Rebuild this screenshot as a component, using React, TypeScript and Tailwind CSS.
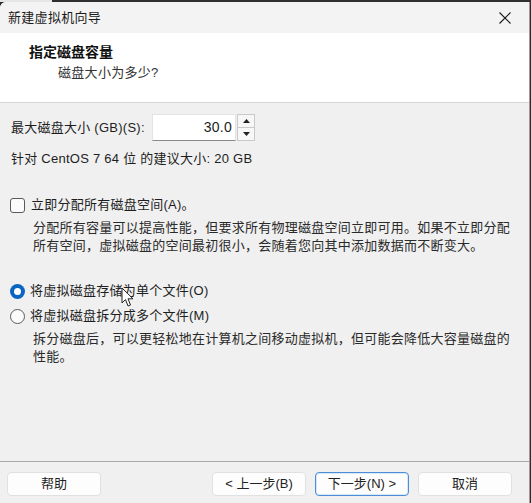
import React from "react";

const FONT = "font-['Liberation_Sans','Noto_Sans_CJK_SC',sans-serif]";

function Checkbox() {
  return <span className="block w-[15px] h-[15px] rounded-[3px] border border-[#5a5a5a] bg-[#fbfbfb]" />;
}

function Radio({ checked }: { checked?: boolean }) {
  if (checked) {
    return (
      <span className="flex items-center justify-center w-[15px] h-[15px] rounded-full bg-[#0a64c2]">
        <span className="block w-[7px] h-[7px] rounded-full bg-white" />
      </span>
    );
  }
  return <span className="block w-[15px] h-[15px] rounded-full border border-[#5a5a5a] bg-[#fbfbfb]" />;
}

function Button({ label, primary }: { label: string; primary?: boolean }) {
  return (
    <button
      className={
        "h-[24px] w-[94px] rounded-[4px] bg-[#fdfdfd] text-[13px] text-[#222] flex items-center justify-center " +
        (primary ? "border border-[#4d8fd6] shadow-[inset_0_0_0_1px_#d6e7f9]" : "border border-[#e1e1e1]")
      }
    >
      {label}
    </button>
  );
}

export default function App() {
  return (
    <div className={`w-[531px] h-[503px] bg-[#2b2b2b] flex flex-col overflow-hidden ${FONT}`}>
      {/* backdrop strip behind the dialog */}
      <div className="flex h-[2px] shrink-0">
        <div className="w-[52px] bg-[#e6e6e6]" />
        <div className="flex-1 bg-[#2f2f2f]" />
      </div>

      <div className="w-[530px] flex-1 flex flex-col bg-[#f0f0f0] border-r border-[#9b9b9b] rounded-tl-[6px] overflow-hidden">
        {/* Title bar */}
        <div className="h-[31px] shrink-0 bg-[#f3f3f3] flex items-center justify-between pl-[8px] pr-[17px]">
          <span className="text-[13px] text-[#1b1b1b] tracking-[0.3px]">新建虚拟机向导</span>
          <svg width="14" height="14" viewBox="0 0 14 14" className="text-[#1b1b1b]">
            <path d="M1.5 1.5 L12.5 12.5 M12.5 1.5 L1.5 12.5" stroke="currentColor" strokeWidth="1.1" fill="none" />
          </svg>
        </div>

        {/* Header */}
        <div className="h-[70px] shrink-0 bg-white border-b border-[#d5d5d5] flex flex-col pl-[29px] pt-[9px]">
          <span className="text-[14px] leading-[20px] font-bold text-[#111]">指定磁盘容量</span>
          <span className="text-[13px] leading-[20px] text-[#333] pl-[29px] mt-[1px] tracking-[0.3px]">磁盘大小为多少?</span>
        </div>

        {/* Body */}
        <div className="relative flex-1 flex flex-col pl-[10px] pr-[14px] pt-[11px] text-[13px] text-[#1e1e1e] tracking-[0.25px]">
          <div className="flex items-center h-[27px] pl-[1px]">
            <span className="w-[141px]">最大磁盘大小 (GB)(S):</span>
            <div className="flex items-stretch h-[27px]">
              <div className="w-[84px] bg-white border border-[#e3e3e3] border-b-[#8a8a8a] flex items-center justify-end pr-[3px] text-[14px]">
                30.0
              </div>
              <div className="w-[18px] flex flex-col border border-[#c9c9c9] bg-[#f7f7f7] ml-[1px]">
                <div className="flex-1 flex items-center justify-center border-b border-[#c9c9c9]">
                  <svg width="7" height="4" viewBox="0 0 7 4"><path d="M0 4 L3.5 0 L7 4 Z" fill="#222" /></svg>
                </div>
                <div className="flex-1 flex items-center justify-center">
                  <svg width="7" height="4" viewBox="0 0 7 4"><path d="M0 0 L3.5 4 L7 0 Z" fill="#222" /></svg>
                </div>
              </div>
            </div>
          </div>

          <div className="mt-[9px] h-[18px] leading-[18px] pl-[1px]">针对 CentOS 7 64 位 的建议大小: 20 GB</div>

          <div className="mt-[28px] flex items-center gap-[6px] h-[18px]">
            <Checkbox />
            <span>立即分配所有磁盘空间(A)。</span>
          </div>
          <p className="mt-[5px] pl-[23px] leading-[18px] text-[#2a2a2a] whitespace-nowrap">
            分配所有容量可以提高性能，但要求所有物理磁盘空间立即可用。如果不立即分配
            <br />
            所有空间，虚拟磁盘的空间最初很小，会随着您向其中添加数据而不断变大。
          </p>

          <div className="mt-[27px] flex items-center gap-[5px] h-[18px]">
            <Radio checked />
            <span>将虚拟磁盘存储为单个文件(O)</span>
          </div>
          <div className="mt-[7px] flex items-center gap-[5px] h-[18px]">
            <Radio />
            <span>将虚拟磁盘拆分成多个文件(M)</span>
          </div>
          <p className="mt-[5px] pl-[23px] leading-[18px] text-[#2a2a2a] whitespace-nowrap">
            拆分磁盘后，可以更轻松地在计算机之间移动虚拟机，但可能会降低大容量磁盘的
            <br />
            性能。
          </p>

          {/* mouse pointer */}
          <svg className="absolute left-[121px] top-[184px]" width="14" height="21" viewBox="0 0 14 21">
            <path d="M1 1 L1 16 L4.5 12.5 L7 19 L9.5 18 L7 11.8 L12 11.8 Z" fill="#fff" stroke="#222" strokeWidth="1" strokeLinejoin="round" />
          </svg>
        </div>

        {/* Footer */}
        <div className="h-[42px] shrink-0 border-t border-[#a9a9a9] flex items-start pt-[10px] pl-[7px] pr-[17px]">
          <Button label="帮助" />
          <div className="flex-1" />
          <div className="flex gap-[9px]">
            <Button label="< 上一步(B)" />
            <Button label="下一步(N) >" primary />
            <Button label="取消" />
          </div>
        </div>
      </div>
    </div>
  );
}
